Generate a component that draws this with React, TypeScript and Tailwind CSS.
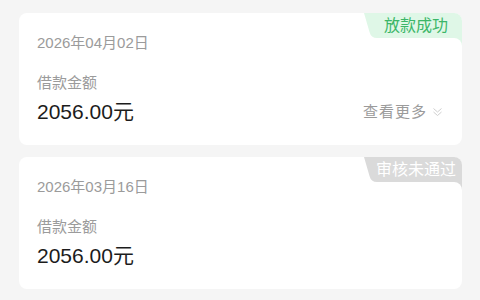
import React from "react";

function Badge({ text, bg, color }: { text: string; bg: string; color: string }) {
  return (
    <>
      <div className="absolute top-0 right-0 w-[98px] h-[25px]">
        <svg className="absolute inset-0" width="98" height="25" viewBox="0 0 98 25">
          <path d="M0 0 H98 V25 H13 Q7 25 5.5 19 L0 0 Z" fill={bg} />
        </svg>
        <div
          className="relative h-full flex items-center justify-center pl-[6px] text-[16px] leading-none"
          style={{ color }}
        >
          {text}
        </div>
      </div>
      <div className="absolute top-[25px] right-0 w-[9px] h-[9px]" style={{ background: bg }}>
        <div className="w-full h-full bg-white rounded-tr-[8px]" />
      </div>
    </>
  );
}

function Card({
  date,
  badge,
  more,
}: {
  date: string;
  badge: { text: string; bg: string; color: string };
  more?: boolean;
}) {
  return (
    <div className="relative bg-white rounded-[8px] overflow-hidden h-[132px] pl-[18px] pr-[20px] pt-[20px]">
      <Badge {...badge} />
      <div className="text-[15px] leading-[20px] text-[#9b9b9b]">{date}</div>
      <div className="mt-[20px] text-[15px] leading-[20px] text-[#9b9b9b]">借款金额</div>
      <div className="mt-[5px] flex items-center justify-between">
        <div className="text-[21px] leading-[28px] text-[#1c1c1c]">2056.00元</div>
        {more && (
          <div className="flex items-center gap-[6px] text-[15px] leading-[20px] text-[#9b9b9b] tracking-[1px]">
            <span>查看更多</span>
            <svg width="9" height="10" viewBox="0 0 9 10" fill="none" stroke="#cfcfcf" strokeWidth="1">
              <polyline points="0.5,1.5 4.5,5 8.5,1.5" />
              <polyline points="0.5,5 4.5,8.5 8.5,5" />
            </svg>
          </div>
        )}
      </div>
    </div>
  );
}

export default function App() {
  return (
    <div
      className="w-[480px] h-[300px] bg-[#f5f5f5] pt-[13px] pl-[19px] pr-[18px] flex flex-col gap-[12px]"
      style={{ fontFamily: '"Liberation Sans", "Noto Sans CJK SC", sans-serif' }}
    >
      <Card
        date="2026年04月02日"
        badge={{ text: "放款成功", bg: "#dff7e7", color: "#3bb668" }}
        more
      />
      <Card
        date="2026年03月16日"
        badge={{ text: "审核未通过", bg: "#dadada", color: "#ffffff" }}
      />
    </div>
  );
}
